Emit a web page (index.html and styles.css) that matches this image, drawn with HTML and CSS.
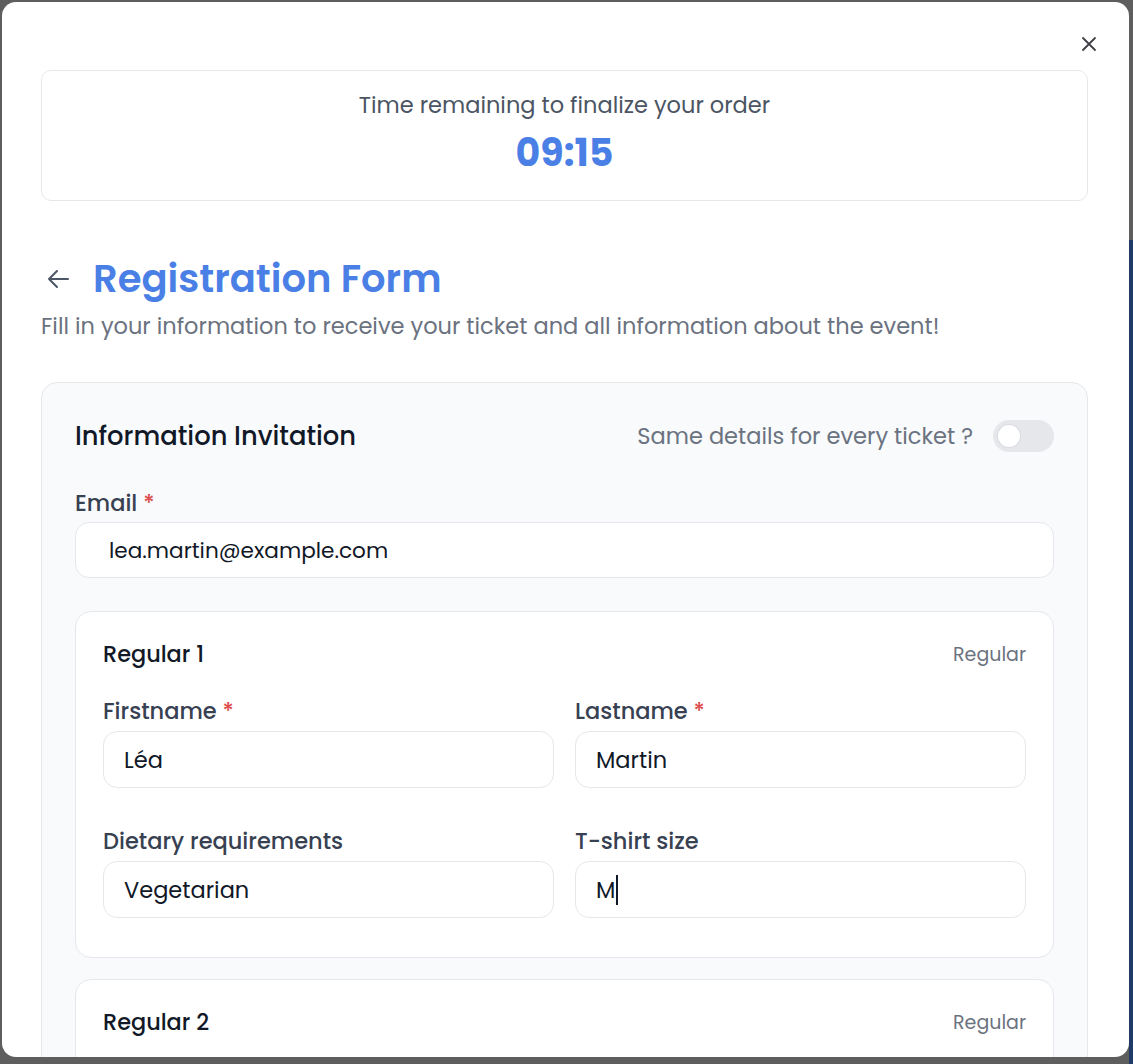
FILE: index.html
```html
<!DOCTYPE html>
<html lang="en">
<head>
    <meta charset="UTF-8">
    <meta name="viewport" content="width=device-width, initial-scale=1.0">
    <title>Registration Form</title>
    <link rel="stylesheet" href="styles.css">
</head>
<body>
    <div class="page-behind"></div>

    <div class="modal">
        <button class="close-btn" aria-label="Close">
            <svg width="16" height="16" viewBox="0 0 16 16" fill="none" stroke="#3f3f46" stroke-width="1.8" stroke-linecap="round">
                <path d="M2 2 L14 14 M14 2 L2 14"/>
            </svg>
        </button>

        <div class="timer">
            <p class="timer-label">Time remaining to finalize your order</p>
            <p class="timer-value">09:15</p>
        </div>

        <div class="title-row">
            <svg class="back-arrow" width="24" height="22" viewBox="0 0 24 22" fill="none" stroke="#4b5563" stroke-width="2" stroke-linecap="round" stroke-linejoin="round">
                <path d="M22 11 H3 M11 3 L3 11 L11 19"/>
            </svg>
            <h1>Registration Form</h1>
        </div>
        <p class="subtitle">Fill in your information to receive your ticket and all information about the event!</p>

        <div class="card">
            <div class="card-header">
                <h2>Information Invitation</h2>
                <div class="same-details">
                    <span>Same details for every ticket ?</span>
                    <div class="toggle"><div class="knob"></div></div>
                </div>
            </div>

            <label class="field-label email-label">Email <span class="req">*</span></label>
            <div class="field-input email-input">lea.martin@example.com</div>

            <div class="ticket">
                <div class="ticket-header">
                    <h3>Regular 1</h3>
                    <span class="ticket-type">Regular</span>
                </div>
                <div class="ticket-grid">
                    <div class="field">
                        <label class="field-label">Firstname <span class="req">*</span></label>
                        <div class="field-input">Léa</div>
                    </div>
                    <div class="field">
                        <label class="field-label">Lastname <span class="req">*</span></label>
                        <div class="field-input">Martin</div>
                    </div>
                    <div class="field">
                        <label class="field-label">Dietary requirements</label>
                        <div class="field-input">Vegetarian</div>
                    </div>
                    <div class="field">
                        <label class="field-label">T-shirt size</label>
                        <div class="field-input">M<span class="caret"></span></div>
                    </div>
                </div>
            </div>

            <div class="ticket">
                <div class="ticket-header">
                    <h3>Regular 2</h3>
                    <span class="ticket-type">Regular</span>
                </div>
            </div>
        </div>
    </div>
</body>
</html>
```

FILE: styles.css
```css
* {
    box-sizing: border-box;
}

body {
    margin: 0;
    height: 100vh;
    overflow: hidden;
    background-color: #5e5e5e;
    font-family: Poppins, Inter, "Noto Sans", sans-serif;
    padding: 2px 4px 0 2px;
}

p, h1, h2, h3 {
    margin: 0;
}

.page-behind {
    position: absolute;
    right: 0;
    top: 240px;
    width: 4px;
    height: 824px;
    background-color: #213b68;
}

.modal {
    position: relative;
    height: 1055px;
    background-color: #fff;
    border-radius: 14px;
    padding: 68px 41px 0 39px;
    overflow: hidden;
}

.close-btn {
    position: absolute;
    top: 34px;
    right: 32px;
    border: none;
    background: none;
    padding: 0;
    cursor: pointer;
}

.timer {
    border: 1px solid #e5e7eb;
    border-radius: 10px;
    padding: 19px 0 23px;
    display: flex;
    flex-direction: column;
    align-items: center;
    gap: 9px;
}

.timer-label {
    font-size: 22.5px;
    line-height: 30px;
    color: #4b5563;
}

.timer-value {
    font-size: 38px;
    line-height: 48px;
    font-weight: 700;
    color: #4a80e6;
}

.title-row {
    display: flex;
    align-items: center;
    gap: 23px;
    margin-top: 56px;
    padding-left: 5px;
}

.title-row h1 {
    font-size: 38.5px;
    line-height: 44px;
    font-weight: 600;
    color: #4a80e6;
}

.subtitle {
    margin-top: 11px;
    font-size: 22.5px;
    line-height: 28px;
    color: #6b7280;
}

.card {
    margin-top: 42px;
    background-color: #f8fafc;
    border: 1px solid #e5e7eb;
    border-radius: 16px;
    padding: 37px 33px 40px;
}

.card-header {
    display: flex;
    justify-content: space-between;
    align-items: center;
    height: 32px;
}

.card-header h2 {
    font-size: 25.8px;
    font-weight: 500;
    color: #111827;
}

.same-details {
    display: flex;
    align-items: center;
    gap: 20px;
    font-size: 22.5px;
    color: #6b7280;
}

.toggle {
    width: 61px;
    height: 32px;
    border-radius: 16px;
    background-color: #e5e7eb;
    padding: 5px;
}

.knob {
    width: 22px;
    height: 22px;
    border-radius: 50%;
    background-color: #fff;
    box-shadow: 0 0 0 1px #d9dce1;
}

.field-label {
    display: block;
    font-size: 22.5px;
    line-height: 28px;
    font-weight: 500;
    color: #374151;
}

.req {
    color: #dc4a4a;
}

.email-label {
    margin-top: 37px;
}

.field-input {
    margin-top: 6px;
    height: 57px;
    border: 1px solid #e5e7eb;
    border-radius: 14px;
    background-color: #fff;
    display: flex;
    align-items: center;
    padding: 0 20px;
    font-size: 22.5px;
    color: #111827;
}

.email-input {
    margin-top: 5px;
    height: 56px;
    padding-left: 33px;
    font-size: 21.6px;
}

.caret {
    display: inline-block;
    width: 1.5px;
    height: 30px;
    background-color: #111827;
    margin-left: 1px;
}

.ticket {
    margin-top: 33px;
    background-color: #fff;
    border: 1px solid #e5e7eb;
    border-radius: 16px;
    padding: 28px 27px 39px;
}

.ticket + .ticket {
    margin-top: 21px;
}

.ticket-header {
    display: flex;
    justify-content: space-between;
    align-items: center;
    height: 28px;
}

.ticket-header h3 {
    font-size: 22.4px;
    font-weight: 500;
    color: #111827;
}

.ticket-type {
    font-size: 19px;
    color: #6b7280;
}

.ticket-grid {
    display: grid;
    grid-template-columns: 1fr 1fr;
    column-gap: 21px;
    row-gap: 39px;
    margin-top: 29px;
}
```
